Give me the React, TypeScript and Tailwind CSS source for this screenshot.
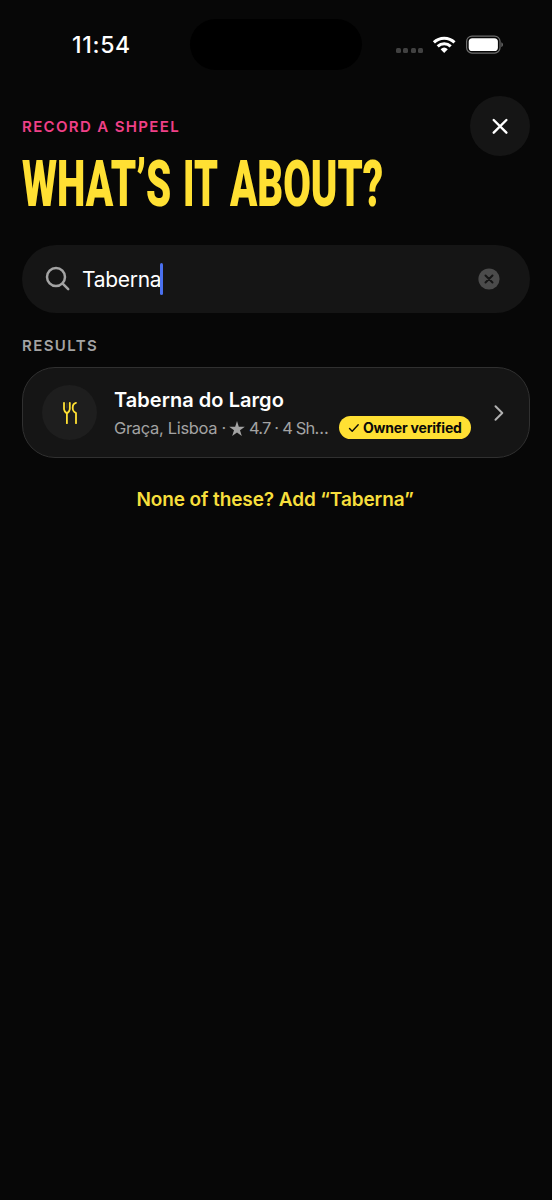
import React, { useState } from "react";

type ResultProps = {
  name: string;
  meta: string;
  rating: string;
};

const StatusBar: React.FC = () => {
  return (
    <div className="relative h-[96px] w-full">
      <span className="absolute left-[72px] top-[31px] text-[23px] leading-[28px] font-medium tracking-[0.7px] text-white">
        11:54
      </span>
      <div className="absolute left-[190px] top-[19px] h-[51px] w-[172px] rounded-full bg-black" />
      <div className="absolute left-[396px] top-[48px] flex gap-[2.4px]">
        <i className="size-[5px] rounded-[1.5px] bg-[#414141]" />
        <i className="size-[5px] rounded-[1.5px] bg-[#414141]" />
        <i className="size-[5px] rounded-[1.5px] bg-[#414141]" />
        <i className="size-[5px] rounded-[1.5px] bg-[#414141]" />
      </div>
      <svg
        className="absolute left-[432px] top-[35px]"
        width="25"
        height="19"
        viewBox="0 0 25 19"
        fill="none"
        stroke="#fff"
        strokeWidth="3"
      >
        <path d="M1.9 7.4a14.7 14.7 0 0 1 20.6 0" />
        <path d="M5.7 11.4a9.3 9.3 0 0 1 13 0" />
        <path
          d="M8.6 14.2a5.4 5.4 0 0 1 7.2 0L12.2 18Z"
          fill="#fff"
          stroke="none"
        />
      </svg>
      <svg
        className="absolute left-[466px] top-[35px]"
        width="38"
        height="19"
        viewBox="0 0 38 19"
      >
        <rect
          x="0.6"
          y="1.1"
          width="33.4"
          height="17"
          rx="5.4"
          fill="none"
          stroke="#6e6e6e"
          strokeWidth="1.2"
        />
        <rect x="2.7" y="3.2" width="29.2" height="12.8" rx="3.6" fill="#fff" />
        <path d="M35.4 7.2c2 .8 2 4 0 4.8Z" fill="#6e6e6e" />
      </svg>
    </div>
  );
};

const Title: React.FC = () => {
  return (
    <h1 className="mt-[16px] flex h-[61px] w-[370px] whitespace-nowrap font-['Roboto','Liberation_Sans',sans-serif] text-[65.5px] leading-[61px] font-black text-[#ffe033]">
      <span className="w-[161px] origin-left scale-x-[0.615]">WHAT’S</span>
      <span className="w-[47px] origin-left scale-x-[0.58]">IT</span>
      <span className="origin-left scale-x-[0.612]">ABOUT?</span>
    </h1>
  );
};

const ResultCard: React.FC<ResultProps> = ({ name, meta, rating }) => {
  return (
    <button className="mt-[11px] flex h-[91px] w-full items-center rounded-[33px] border border-[#303030] bg-[#151515] pl-[20px] pr-[24px] text-left">
      <span className="-ml-px mr-px flex size-[55px] shrink-0 items-center justify-center rounded-full bg-[#1e1e1e]">
        <svg
          width="16"
          height="24"
          viewBox="0 0 16 24"
          fill="none"
          stroke="#ffe033"
          strokeWidth="1.8"
          strokeLinecap="round"
          strokeLinejoin="round"
        >
          <path d="M2 1.8v6.4c0 1.600.8 2.400 2.900 4.300 2.100-1.900 2.900-2.700 2.900-4.300V1.800M4.900 12.500v9.700" />
          <path d="M4.900 2v5" strokeWidth="0.6" strokeOpacity="0.4" />
          <path d="M14 1.800c-2.500.5-3.300 2.500-3.300 5 0 3.200.8 3.900 3.300 5.200v10.200" />
        </svg>
      </span>
      <span className="ml-[16px] flex w-[357px] shrink-0 flex-col pt-[2px]">
        <span className="text-[20px] leading-[28px] font-semibold tracking-[0.05px] text-white">
          {name}
        </span>
        <span className="flex h-[28px] items-center">
          <span className="flex w-[225px] items-center whitespace-nowrap pt-px text-[16.5px] tracking-[-0.33px] text-[#a3a3a3]">
            <span>{meta}</span>
            <svg
              className="ml-[3px] mr-[4px] shrink-0"
              width="16"
              height="15"
              viewBox="0 0 24 23"
              fill="#a3a3a3"
            >
              <path d="M12 0l2.800 8.700H24l-7.400 5.400L19.400 23 12 17.500 4.600 23l2.800-8.900L0 8.700h9.200z" />
            </svg>
            <span className="tracking-[-0.8px]">{rating}</span>
          </span>
          <span className="flex h-[23px] w-[132px] items-center whitespace-nowrap rounded-full bg-[#ffe033] pl-[9px] text-[14px] font-bold tracking-[-0.2px] text-[#0a0a0a]">
            <svg
              className="mr-[3px]"
              width="12"
              height="10"
              viewBox="0 0 12 10"
              fill="none"
              stroke="#0a0a0a"
              strokeWidth="1.4"
              strokeLinecap="round"
              strokeLinejoin="round"
            >
              <path d="M1.500 5.600l2.700 2.700 6-6.500" />
            </svg>
            Owner verified
          </span>
        </span>
      </span>
      <svg
        className="ml-auto shrink-0"
        width="12"
        height="18"
        viewBox="0 0 12 18"
        fill="none"
        stroke="#b0b0b0"
        strokeWidth="2"
        strokeLinecap="round"
        strokeLinejoin="round"
      >
        <path d="M2.500 2.300l6.800 6.700-6.800 6.700" />
      </svg>
    </button>
  );
};

const App: React.FC = () => {
  const [query, setQuery] = useState<string>("Taberna");

  return (
    <div className="h-[1200px] w-[552px] overflow-hidden bg-[#070707] font-['Inter','Liberation_Sans',sans-serif]">
      <StatusBar />
      <div className="px-[22px]">
        <div className="flex h-[137px] justify-between">
          <div className="pt-[21px]">
            <p className="text-[15px] leading-[20px] font-semibold tracking-[1.35px] text-[#f04087]">
              RECORD A SHPEEL
            </p>
            <Title />
          </div>
          <button className="-ml-[60px] flex size-[60px] shrink-0 items-center justify-center rounded-full bg-[#151515]">
            <svg
              width="18"
              height="18"
              viewBox="0 0 18 18"
              stroke="#fff"
              strokeWidth="2.4"
              strokeLinecap="round"
            >
              <path d="M2.700 3l12.700 12.700M15.400 3L2.700 15.700" />
            </svg>
          </button>
        </div>

        <div className="mt-[12px] flex h-[68px] items-center rounded-full bg-[#151515] pl-[23px] pr-[30px]">
          <svg
            width="26"
            height="26"
            viewBox="0 0 26 26"
            fill="none"
            stroke="#a3a3a3"
            strokeWidth="2.5"
            strokeLinecap="round"
          >
            <circle cx="11" cy="11" r="9" />
            <path d="M17.700 17.700l5.500 5.500" />
          </svg>
          <span className="ml-[11px] pt-px text-[21px] leading-[28px] tracking-[-0.3px] text-white">
            {query}
          </span>
          <span className="-ml-px h-[32px] w-[3px] rounded-full bg-[#4a70ee]" />
          <button className="ml-auto" onClick={() => setQuery("")}>
            <svg width="22" height="22" viewBox="0 0 22 22">
              <circle cx="11" cy="11" r="10.600" fill="#4b4b4b" />
              <path
                d="M7.500 7.500l7 7M14.500 7.500l-7 7"
                stroke="#151515"
                strokeWidth="2"
                strokeLinecap="round"
              />
            </svg>
          </button>
        </div>

        <p className="mt-[23px] text-[15px] leading-[20px] font-semibold tracking-[1.4px] text-[#a3a3a3]">
          RESULTS
        </p>
        <ResultCard
          name="Taberna do Largo"
          meta="Graça, Lisboa ·"
          rating="4.7 · 4 Sh…"
        />
        <button className="mt-[28px] block w-full pr-[2px] text-center text-[19px] leading-[28px] font-semibold tracking-[-0.1px] text-[#f7df3c]">
          None of these? Add “Taberna”
        </button>
      </div>
    </div>
  );
};

export default App;
